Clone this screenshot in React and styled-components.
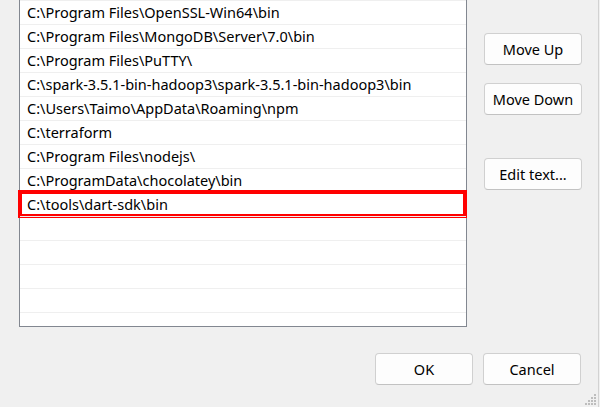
import React from "react";
import styled, { createGlobalStyle } from "styled-components";

const Global = createGlobalStyle`
  html, body { margin: 0; padding: 0; background: #f0f0f0; }
  body { font-family: "Segoe UI", "Noto Sans", "Open Sans", sans-serif; }
`;

const Window = styled.div`
  position: relative;
  width: 599px;
  height: 407px;
  box-sizing: border-box;
  border-right: 1px solid #d2d2d2;
  background: #f0f0f0;
  display: flex;
  flex-direction: column;
  overflow: hidden;
`;

const Top = styled.div`
  display: flex;
  padding-left: 19px;
`;

const List = styled.div`
  width: 448px;
  height: 327px;
  box-sizing: border-box;
  background: #ffffff;
  border: 1px solid #828790;
  border-top: none;
  display: flex;
  flex-direction: column;
`;

const Row = styled.div`
  position: relative;
  flex: 0 0 24px;
  height: 24px;
  box-sizing: border-box;
  border-top: 1px solid #efefef;
  padding-left: 7px;
  font-size: 14.5px;
  line-height: 23px;
  color: #000;
  white-space: nowrap;
  overflow: visible;
  ${(p) => (p.$fill ? "flex: 1 1 auto; height: auto; min-height: 0;" : "")}
  ${(p) =>
    p.$marked
      ? `&::after {
          content: "";
          position: absolute;
          left: -2px;
          right: -1px;
          top: -3px;
          bottom: -2px;
          border: 4px solid #ff0000;
          box-sizing: border-box;
        }`
      : ""}
`;

const Side = styled.div`
  display: flex;
  flex-direction: column;
  margin-left: 17px;
  padding-top: 33px;
`;

const Button = styled.button`
  width: 98px;
  height: 32px;
  box-sizing: border-box;
  border: 1px solid #d0d0d0;
  border-bottom-color: #c2c2c2;
  border-radius: 4px;
  background: #fdfdfd;
  font-family: inherit;
  font-size: 14.5px;
  color: #000;
  padding: 0;
  margin-top: ${(p) => p.$gap || 0}px;
`;

const Footer = styled.div`
  display: flex;
  justify-content: flex-end;
  gap: 10px;
  padding-top: 26px;
  padding-right: 17px;
`;

const Grip = styled.svg`
  position: absolute;
  right: 1px;
  bottom: 1px;
`;

const paths = [
  "C:\\Program Files\\OpenSSL-Win64\\bin",
  "C:\\Program Files\\MongoDB\\Server\\7.0\\bin",
  "C:\\Program Files\\PuTTY\\",
  "C:\\spark-3.5.1-bin-hadoop3\\spark-3.5.1-bin-hadoop3\\bin",
  "C:\\Users\\Taimo\\AppData\\Roaming\\npm",
  "C:\\terraform",
  "C:\\Program Files\\nodejs\\",
  "C:\\ProgramData\\chocolatey\\bin",
  "C:\\tools\\dart-sdk\\bin",
  "",
  "",
  "",
  "",
];

export default function App() {
  return (
    <>
      <Global />
      <Window>
        <Top>
          <List>
            {paths.map((p, i) => (
              <Row key={i} $marked={i === 8}>
                {p}
              </Row>
            ))}
            <Row $fill />
          </List>
          <Side>
            <Button>Move Up</Button>
            <Button $gap={18}>Move Down</Button>
            <Button $gap={43}>Edit text...</Button>
          </Side>
        </Top>
        <Footer>
          <Button>OK</Button>
          <Button>Cancel</Button>
        </Footer>
        <Grip width="12" height="12" viewBox="0 0 12 12">
          {[
            [9, 0],
            [6, 3],
            [9, 3],
            [3, 6],
            [6, 6],
            [9, 6],
            [0, 9],
            [3, 9],
            [6, 9],
            [9, 9],
          ].map(([x, y], i) => (
            <rect key={i} x={x} y={y} width="2" height="2" fill="#bdbdbd" />
          ))}
        </Grip>
      </Window>
    </>
  );
}
